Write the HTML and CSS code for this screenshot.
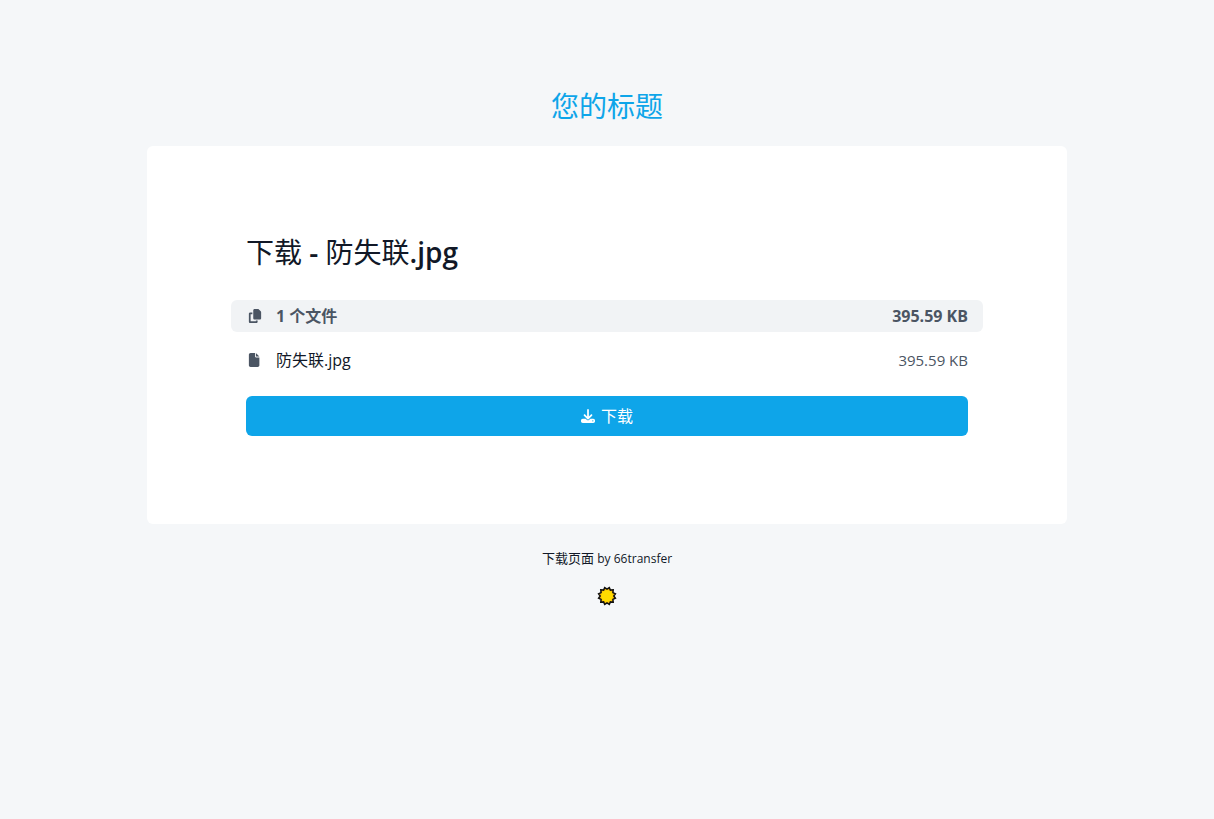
FILE: index.html
```html
<!DOCTYPE html>
<html lang="zh-CN">

<head>
    <meta charset="UTF-8">
    <meta name="viewport" content="width=device-width, initial-scale=1.0">
    <title>下载 - 防失联.jpg</title>
    <link rel="stylesheet" href="styles.css">
</head>

<body>
    <div class="container">
        <header class="header">
            <a class="brand" href="#">您的标题</a>
        </header>

        <main class="card">
            <h1 class="title">下载 <span class="latin">-</span> 防失联<span class="latin">.jpg</span></h1>

            <div class="row summary">
                <svg class="icon" viewBox="-32 0 512 512" aria-hidden="true">
                    <path d="M208 0h124c13 0 25 5 34 14l68 68c9 9 14 21 14 34v220c0 27-21 48-48 48H208c-27 0-48-21-48-48V48c0-27 21-48 48-48zM48 128h80v64H64v256h192v-32h64v48c0 27-21 48-48 48H48c-27 0-48-21-48-48V176c0-27 21-48 48-48z" />
                </svg>
                <span class="name">1 个文件</span>
                <span class="size">395.59 KB</span>
            </div>
            <div class="row file">
                <svg class="icon" viewBox="-32 0 512 512" aria-hidden="true">
                    <path d="M0 64C0 29 29 0 64 0h160v128c0 18 14 32 32 32h128v288c0 35-29 64-64 64H64c-35 0-64-29-64-64V64zm384 64H256V0l128 128z" />
                </svg>
                <span class="name">防失联.jpg</span>
                <span class="size">395.59 KB</span>
            </div>

            <button class="download" type="button">
                <svg class="icon" viewBox="0 0 512 512" aria-hidden="true">
                    <path d="M288 32c0-18-14-32-32-32s-32 14-32 32v243l-73-74c-13-12-33-12-46 0-12 13-12 33 0 46l128 128c13 12 33 12 46 0l128-128c12-13 12-33 0-46-13-12-33-12-46 0l-73 74V32zM64 352c-35 0-64 29-64 64v32c0 35 29 64 64 64h384c35 0 64-29 64-64v-32c0-35-29-64-64-64H347l-46 45c-25 25-65 25-90 0l-46-45H64zm368 56a24 24 0 1 1 0 48 24 24 0 1 1 0-48z" />
                </svg>
                <span>下载</span>
            </button>
        </main>

        <footer class="footer">
            <p class="credit">下载页面 <span class="credit-name">by 66transfer</span></p>
            <button class="theme" type="button" aria-label="切换主题">
                <svg class="sun" viewBox="0 0 20 20" aria-hidden="true">
                    <radialGradient id="glow">
                        <stop offset="60%" stop-color="#ffdc00" />
                        <stop offset="100%" stop-color="#f59e0b" />
                    </radialGradient>
                    <polygon fill="url(#glow)" points="10,3.200 12.300,1.600 13.400,4.100 16.200,3.800 15.900,6.600 18.400,7.700 16.800,10 18.400,12.300 15.900,13.400 16.200,16.200 13.400,15.900 12.300,18.400 10,16.800 7.700,18.400 6.600,15.900 3.800,16.200 4.100,13.400 1.600,12.300 3.200,10 1.600,7.700 4.100,6.600 3.800,3.800 6.600,4.100 7.700,1.600" />
                </svg>
            </button>
        </footer>
    </div>
</body>

</html>
```
FILE: styles.css
```css
* {
    box-sizing: border-box;
    margin: 0;
    padding: 0;
}

body {
    background: #f5f7f9;
    color: #111827;
    font-family: "Open Sans", "Noto Sans CJK SC", sans-serif;
    font-size: 16px;
    line-height: 24px;
}

.container {
    width: 100%;
    max-width: 952px;
    margin: 0 auto;
    padding: 88px 16px 32px;
}

.header {
    margin-bottom: 22px;
    text-align: center;
}

.brand {
    display: block;
    color: #0ea5e9;
    font-size: 28px;
    line-height: 36px;
    text-decoration: none;
}

.card {
    padding: 88px 99px;
    border-radius: 6px;
    background: #fff;
}

.title {
    margin-bottom: 30px;
    font-size: 28px;
    font-weight: 400;
    line-height: 36px;
}

.latin {
    font-weight: 600;
}

.row {
    display: flex;
    align-items: center;
    margin: 0 -15px;
    padding: 4px 15px;
    color: #4b5563;
}

.icon {
    flex: none;
    width: 14px;
    height: 14px;
    fill: currentColor;
}

.row .icon {
    margin: 0 14px 0 2px;
}

.name {
    flex: 1;
}

.size {
    font-size: 15px;
}

.summary {
    margin-bottom: 12px;
    border-radius: 6px;
    background: #f1f3f5;
    font-weight: 700;
}

.summary .size {
    font-size: 16px;
}

.file .name {
    color: #111827;
}

.download {
    display: flex;
    align-items: center;
    justify-content: center;
    gap: 6px;
    width: 100%;
    height: 40px;
    margin-top: 20px;
    border: none;
    border-radius: 6px;
    background: #0ea5e9;
    color: #fff;
    font: inherit;
    cursor: pointer;
}

.footer {
    padding-top: 24px;
    text-align: center;
}

.credit {
    font-size: 13px;
    line-height: 20px;
}

.credit-name {
    font-size: 12px;
}

.theme {
    margin-top: 17px;
    border: none;
    background: none;
    cursor: pointer;
}

.sun {
    display: block;
    width: 20px;
    height: 20px;
    stroke: #111;
    stroke-width: 1.5;
}
```
